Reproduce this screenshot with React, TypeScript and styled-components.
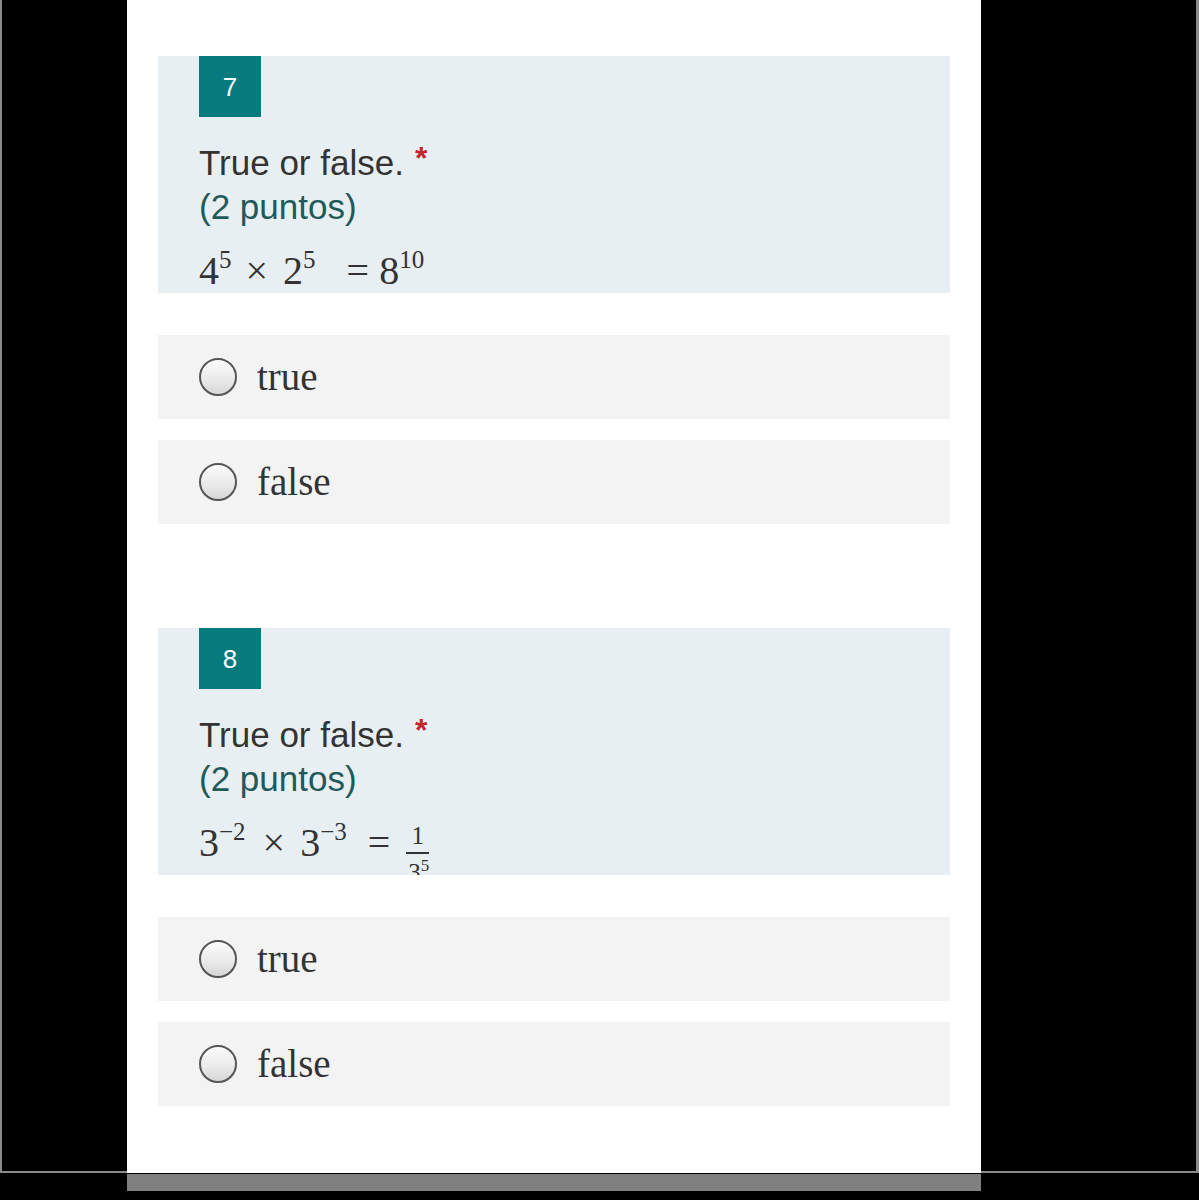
import React from "react";
import styled, { createGlobalStyle } from "styled-components";

const GlobalStyle = createGlobalStyle`
  html, body { margin: 0; padding: 0; background: #000; }
  body { font-family: "Liberation Sans", Arial, sans-serif; }
  * { box-sizing: border-box; }
`;

const Frame = styled.div`
  width: 1199px;
  height: 1173px;
  border-left: 2px solid #8a8a8a;
  border-right: 3px solid #8a8a8a;
  border-bottom: 2px solid #8a8a8a;
  background: #000;
  display: flex;
`;

const Panel = styled.main`
  margin-left: 125px;
  width: 854px;
  height: 1173px;
  background: #fff;
  padding: 56px 31px 0;
  display: flex;
  flex-direction: column;
`;

const ScrollRow = styled.div`
  padding-left: 127px;
  padding-top: 1px;
`;

const ScrollThumb = styled.div`
  width: 854px;
  height: 17px;
  background: #808080;
`;

const Question = styled.section<{ $gapAfter: number }>`
  display: flex;
  flex-direction: column;
  margin-bottom: ${(p) => p.$gapAfter}px;
`;

const Header = styled.div<{ $height: number }>`
  background: #e8eff2;
  padding: 0 41px;
  height: ${(p) => p.$height}px;
  overflow: hidden;
  margin-bottom: 42px;
`;

const Badge = styled.div`
  width: 62px;
  height: 61px;
  background: #077a7e;
  color: #fff;
  font-family: "Liberation Sans", Arial, sans-serif;
  font-size: 26px;
  display: flex;
  align-items: center;
  justify-content: center;
  padding-top: 2px;
`;

const Title = styled.div`
  margin-top: 19px;
  font-size: 35px;
  line-height: 44px;
  color: #333;
`;

const Required = styled.span`
  color: #c4262e;
  font-size: 32px;
  font-weight: bold;
  margin-left: 11px;
  vertical-align: 6px;
`;

const Points = styled.div`
  font-size: 35px;
  line-height: 44px;
  color: #1f5a5b;
`;

const MathRow = styled.div`
  margin-top: 18px;
  min-height: 40px;
  font-family: "Liberation Serif", "Times New Roman", serif;
  font-size: 40px;
  line-height: 40px;
  color: #333;
  white-space: nowrap;
`;

const Sup = styled.sup`
  font-size: 25px;
  line-height: 25px;
  vertical-align: 16px;
`;

const Op = styled.span<{ $l: number; $r: number }>`
  display: inline-block;
  margin-left: ${(p) => p.$l}px;
  margin-right: ${(p) => p.$r}px;
`;

const Frac = styled.span`
  display: inline-flex;
  flex-direction: column;
  align-items: center;
  vertical-align: 12px;
  font-size: 25px;
  line-height: 25px;
  padding: 0 3px;
  margin-bottom: -60px;
`;

const FracBar = styled.span`
  align-self: stretch;
  height: 1.5px;
  background: #333;
  margin: 4px 0 3px;
`;

const Denom = styled.span`
  padding-left: 2px;
`;

const SmallSup = styled.sup`
  font-size: 17px;
  line-height: 17px;
  vertical-align: 10px;
`;

const Option = styled.label`
  display: flex;
  align-items: center;
  gap: 20px;
  height: 84px;
  padding-left: 41px;
  background: #f3f3f3;
  margin-bottom: 21px;
  cursor: pointer;
  &:last-child { margin-bottom: 0; }
`;

const Radio = styled.span`
  width: 38px;
  height: 38px;
  border-radius: 50%;
  border: 2px solid #555;
  background: linear-gradient(180deg, #fbfbfb 0%, #e9e9e9 60%, #d6d6d6 100%);
  box-shadow: inset 0 1px 1px rgba(255,255,255,0.9);
  flex: none;
`;

const OptionText = styled.span`
  font-family: "Liberation Serif", "Times New Roman", serif;
  font-size: 39px;
  color: #333;
  line-height: 1;
  margin-top: -2px;
`;

const Options = styled.div`
  display: flex;
  flex-direction: column;
`;

function Answers() {
  return (
    <Options>
      <Option>
        <Radio />
        <OptionText>true</OptionText>
      </Option>
      <Option>
        <Radio />
        <OptionText>false</OptionText>
      </Option>
    </Options>
  );
}

export default function App() {
  return (
    <>
      <GlobalStyle />
      <Frame>
        <Panel>
          <Question $gapAfter={104}>
            <Header $height={237}>
              <Badge>7</Badge>
              <Title>
                True or false.<Required>*</Required>
              </Title>
              <Points>(2 puntos)</Points>
              <MathRow>
                4<Sup>5</Sup>
                <Op $l={14} $r={15}>×</Op>
                2<Sup>5</Sup>
                <Op $l={31} $r={10}>=</Op>
                8<Sup>10</Sup>
              </MathRow>
            </Header>
            <Answers />
          </Question>
          <Question $gapAfter={0}>
            <Header $height={247}>
              <Badge>8</Badge>
              <Title>
                True or false.<Required>*</Required>
              </Title>
              <Points>(2 puntos)</Points>
              <MathRow>
                3<Sup>−2</Sup>
                <Op $l={17} $r={15}>×</Op>
                3<Sup>−3</Sup>
                <Op $l={21} $r={13}>=</Op>
                <Frac>
                  <span>1</span>
                  <FracBar />
                  <Denom>
                    3<SmallSup>5</SmallSup>
                  </Denom>
                </Frac>
              </MathRow>
            </Header>
            <Answers />
          </Question>
        </Panel>
      </Frame>
      <ScrollRow>
        <ScrollThumb />
      </ScrollRow>
    </>
  );
}
